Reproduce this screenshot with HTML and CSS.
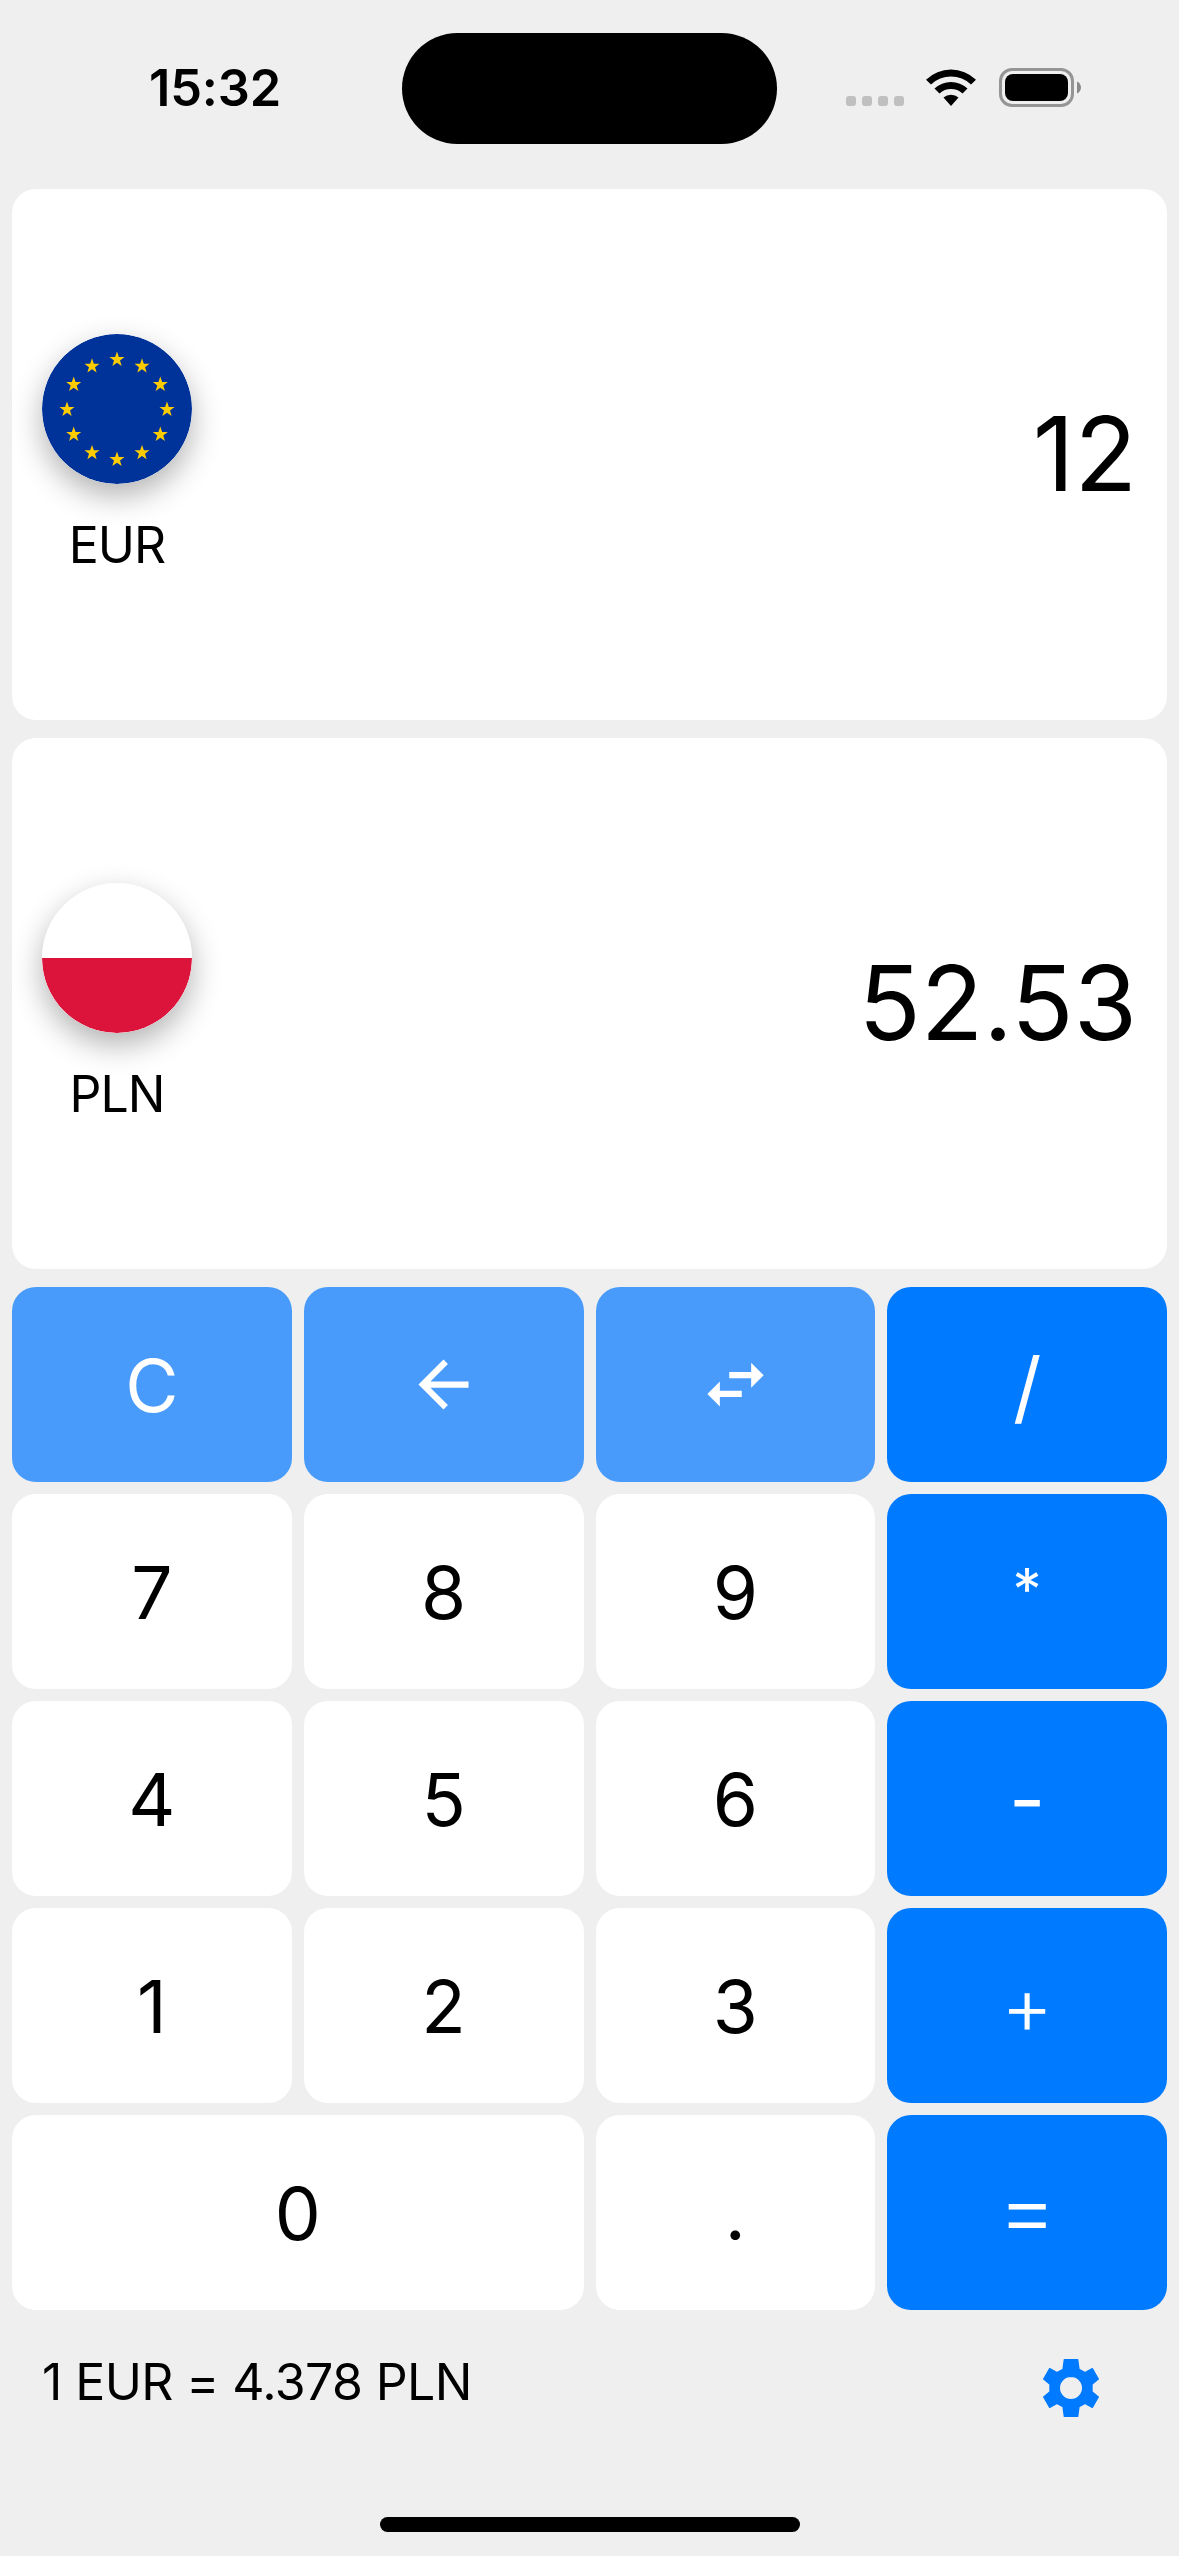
FILE: index.html
```html
<!DOCTYPE html>
<html lang="en">
<head>
<meta charset="utf-8">
<title>Currency calculator</title>
<link rel="stylesheet" href="styles.css">
</head>
<body>
<div class="app">
  <header class="status">
    <div class="clock">15:32</div>
    <div class="island"></div>
    <div class="indicators">
      <div class="signal"><i></i><i></i><i></i><i></i></div>
      <svg class="wifi" viewBox="0 0 50 37"><path d="M0 10.700A36 36 0 0 1 50 10.700L45 15.500A29 29 0 0 0 5 15.500Z"/><path d="M8.500 19.500A24 24 0 0 1 41.500 19.500L36.500 24.500A17 17 0 0 0 13.500 24.500Z"/><path d="M17.500 28.500A12 12 0 0 1 32.500 28.500L25 37Z"/></svg>
      <svg class="battery" viewBox="0 0 82 39"><rect x="1.500" y="1.500" width="72" height="36" rx="11.500" fill="none" stroke="#959595" stroke-width="3"/><rect x="6" y="6" width="63" height="27" rx="8"/><path d="M78 13.500C83.300 15.500 83.300 23.500 78 25.500Z" fill="#8a8a8a"/></svg>
    </div>
  </header>

  <main class="main">
    <section class="card">
      <div class="currency">
        <svg class="flag" viewBox="0 0 150 150">
          <defs><path id="star" d="M0-7.900L1.860-2.560 7.510-2.440 3.010.98 4.640 6.390 0 3.170-4.640 6.390-3.010.98-7.510-2.440-1.860-2.560Z"/></defs>
          <circle cx="75" cy="75" r="75" fill="#039"/>
          <g fill="#fc0">
            <use href="#star" x="75" y="25.500"/><use href="#star" x="100" y="32.200"/><use href="#star" x="118.300" y="50.500"/>
            <use href="#star" x="125" y="75.500"/><use href="#star" x="118.300" y="100.500"/><use href="#star" x="100" y="118.800"/>
            <use href="#star" x="75" y="125.500"/><use href="#star" x="50" y="118.800"/><use href="#star" x="31.700" y="100.500"/>
            <use href="#star" x="25" y="75.500"/><use href="#star" x="31.700" y="50.500"/><use href="#star" x="50" y="32.200"/>
          </g>
        </svg>
        <span class="code">EUR</span>
      </div>
      <div class="amount">12</div>
    </section>
    <section class="card">
      <div class="currency">
        <svg class="flag" viewBox="0 0 150 150"><circle cx="75" cy="75" r="75" fill="#fff"/><path d="M0 75H150A75 75 0 0 1 0 75Z" fill="#dc143c"/></svg>
        <span class="code">PLN</span>
      </div>
      <div class="amount">52.53</div>
    </section>

    <section class="keys">
      <button class="key soft">C</button>
      <button class="key soft"><svg class="icon" viewBox="0 0 24 24"><path d="M20 11H7.830l5.590-5.590L12 4l-8 8 8 8 1.410-1.410L7.830 13H20v-2z"/></svg></button>
      <button class="key soft"><svg class="icon" viewBox="0 0 24 24"><path d="M6.990 11L3 15l3.990 4v-3H14v-2H6.990v-3zM21 9l-3.990-4v3H10v2h7.010v3L21 9z"/></svg></button>
      <button class="key op">/</button>
      <button class="key">7</button><button class="key">8</button><button class="key">9</button><button class="key op times">*</button>
      <button class="key">4</button><button class="key">5</button><button class="key">6</button><button class="key op minus">-</button>
      <button class="key">1</button><button class="key">2</button><button class="key">3</button><button class="key op plus">+</button>
      <button class="key wide">0</button><button class="key">.</button><button class="key op equals">=</button>
    </section>
  </main>

  <footer class="footer">
    <div class="rate">1 EUR = 4.378 PLN</div>
    <svg class="gear" viewBox="0 0 240 240"><path fill-rule="evenodd" d="M100 35H140L144 64L162 74L184 62L202 93L183 109V131L202 147L184 178L162 166L144 176L140 205H100L96 176L78 166L56 178L38 147L57 131V109L38 93L56 62L78 74L96 64ZM120 85A35 35 0 0 0 120 155A35 35 0 0 0 120 85Z"/></svg>
  </footer>
  <div class="home"></div>
</div>
</body>
</html>
```
FILE: styles.css
```css
* { box-sizing: border-box; }
body { margin: 0; background: #efefef; color: #000; font-family: Inter, "Liberation Sans", sans-serif; }
.app { width: 1179px; height: 2556px; display: flex; flex-direction: column; overflow: hidden; }

.status { height: 189px; flex: none; display: grid; grid-template-columns: 402px 375px 402px; align-items: start; }
.clock { padding: 57px 0 0 28px; text-align: center; font-size: 50.5px; line-height: 62px; font-weight: 600; letter-spacing: -.2px; }
.island { margin-top: 33px; height: 111px; border-radius: 56px; background: #000; }
.indicators { display: flex; padding: 68px 0 0 69px; }
.signal { display: flex; gap: 6px; padding-top: 28px; margin-right: 22px; }
.signal i { width: 10px; height: 10px; border-radius: 3px; background: #c0c0c0; }
.wifi { width: 50px; height: 37px; margin: 1px 23px 0 0; }
.battery { width: 82px; height: 39px; }

.main { padding: 0 12px; display: flex; flex-direction: column; gap: 18px; }
.card { height: 531px; border-radius: 24px; background: #fff; padding: 0 30px; display: flex; justify-content: space-between; }
.currency { width: 150px; padding-top: 145px; display: flex; flex-direction: column; align-items: center; }
.flag { width: 150px; height: 150px; border-radius: 50%; box-shadow: 0 12px 30px rgba(0, 0, 0, .3); }
.code { margin-top: 31px; font-size: 50px; line-height: 60px; letter-spacing: -1px; }
.amount { padding-top: 205px; font-size: 102.500px; line-height: 120px; }

.keys { display: grid; grid-template-columns: repeat(4, 1fr); grid-auto-rows: 195px; gap: 12px; }
.key { border: 0; border-radius: 24px; padding: 2px 0 0; background: #fff; color: #000; font: 400 73px/90px Inter, "Liberation Sans", sans-serif; display: flex; align-items: center; justify-content: center; }
.wide { grid-column: span 2; }
.soft { background: #489bfb; color: #fff; }
.soft:has(.icon) { padding: 0; }
.op { background: #007aff; color: #fff; font-size: 79px; }
.times { font-size: 58px; padding: 0 0 6px; }
.minus { padding: 0; }
.plus { padding: 0 0 2px; font-size: 80px; font-weight: 350; }
.equals { padding: 0 0 8px; font-size: 91px; font-weight: 300; }
.icon { width: 75px; height: 75px; fill: currentColor; }

.footer { flex: none; display: flex; justify-content: space-between; padding: 38px 68px 0 42px; }
.rate { font-size: 50px; line-height: 60px; letter-spacing: -.6px; padding-top: 4px; }
.gear { width: 80px; height: 80px; fill: #007aff; stroke: #007aff; stroke-width: 4; stroke-linejoin: round; }
.home { flex: none; width: 420px; height: 15px; border-radius: 8px; background: #000; margin: auto auto 24px; }
```
